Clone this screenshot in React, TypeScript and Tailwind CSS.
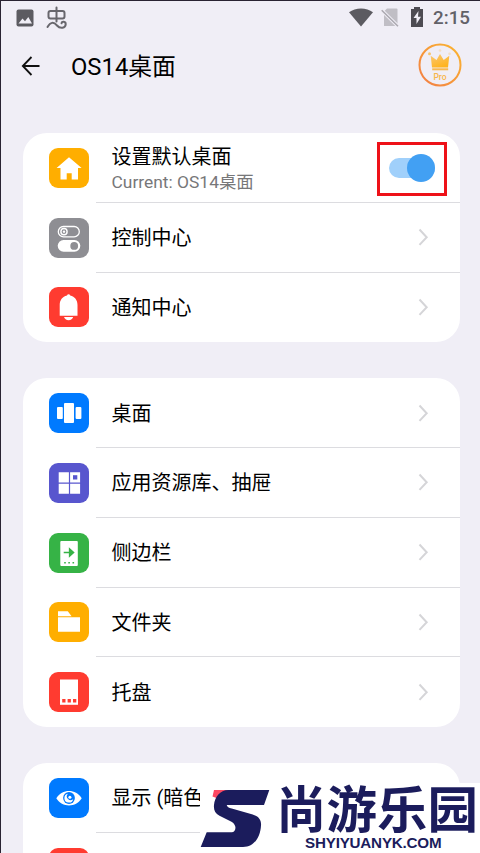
import type { ReactNode } from 'react';

const Tile = ({ color, children }: { color: string; children: ReactNode }) => (
  <svg className={`ml-[26px] h-10 w-10 shrink-0 rounded-[9px] ${color}`} viewBox="0 0 40 40" fill="#fff">
    {children}
  </svg>
);

const HomeIcon = () => (
  <Tile color="bg-[#ffae00]">
    <path d="M20 9.2 32.6 20H29v11.4h-6.300v-6.200h-5v6.200h-6.200V20H7.600Z" />
  </Tile>
);

const ControlIcon = () => (
  <Tile color="bg-[#8e8e93]">
    <rect x="9.300" y="8.500" width="21" height="10.300" rx="5.150" fill="none" stroke="#fff" strokeWidth="1.300" />
    <circle cx="15" cy="13.650" r="3.100" fill="none" stroke="#fff" strokeWidth="1.400" />
    <circle cx="15" cy="13.650" r="1.200" />
    <rect x="8.700" y="22" width="22.600" height="11.700" rx="5.850" />
    <circle cx="25.200" cy="27.900" r="3.900" fill="#8e8e93" />
  </Tile>
);

const BellIcon = () => (
  <Tile color="bg-[#ff3b30]">
    <path d="M18 8.500a1.700 1.700 0 0 1 3.200 0c4.600 1.100 7.300 4.600 7.300 9.500v10.700H10.700V18c0-4.900 2.700-8.400 7.300-9.500ZM15 30h9.200c-.7 2-2.200 3.200-4.600 3.200S15.700 32 15 30Z" />
  </Tile>
);

const DesktopIcon = () => (
  <Tile color="bg-[#007aff]">
    <rect x="8" y="14" width="5.800" height="12" rx="1" />
    <rect x="15" y="10" width="10" height="20" rx="1" />
    <rect x="26.600" y="14" width="5.800" height="12" rx="1" />
  </Tile>
);

const LibraryIcon = () => (
  <Tile color="bg-[#5856ce]">
    <path d="M9.700 9.300h10.200v10.200H9.700ZM21.100 9.300h10v10.200h-10ZM9.700 20.700h10.200v10H9.700ZM21.100 20.700h10v10h-10Z" />
    <rect x="24" y="12.200" width="4.300" height="4.300" fill="#5856ce" />
  </Tile>
);

const SidebarIcon = () => (
  <Tile color="bg-[#36b346]">
    <rect x="11.300" y="8" width="17.500" height="25" rx="1" />
    <path d="M14.700 19.500h8M20.500 15.700l4.200 3.800-4.200 3.800Z" fill="#36b346" stroke="#36b346" strokeWidth="1.300" />
    <path d="M15.200 29h1.600v1.600h-1.600ZM19.300 29h1.600v1.600h-1.600ZM23.500 29h1.600v1.600h-1.600Z" fill="#36b346" />
  </Tile>
);

const FolderIcon = () => (
  <Tile color="bg-[#ffae00]">
    <path d="M9 9.200h9.800l3.800 5H9ZM9 15.200h22v14.500H9Z" />
  </Tile>
);

const TrayIcon = () => (
  <Tile color="bg-[#ff3b30]">
    <rect x="11" y="7.500" width="18" height="25.300" />
    <path d="M13.200 26.900h3.300v3.600h-3.300ZM18.600 26.900h3.300v3.600h-3.300ZM24 26.900h3.300v3.600H24Z" fill="#ff3b30" />
  </Tile>
);

const EyeIcon = () => (
  <Tile color="bg-[#007aff]">
    <path d="M7.300 20.200C10.500 15.500 15 13 20 13s9.500 2.500 12.700 7.200C29.500 25 25 27.400 20 27.400S10.500 25 7.300 20.200Z" />
    <circle cx="20" cy="20" r="5.900" fill="#007aff" />
    <path d="M19 15.700a4.500 4.500 0 1 0 5.300 5.300 3.600 3.600 0 1 1-5.300-5.300Z" />
    <circle cx="20.900" cy="19.200" r="1.500" />
  </Tile>
);

const Chevron = () => (
  <svg className="mr-[30px] h-5 w-[14px] shrink-0" viewBox="0 0 14 20" fill="none" stroke="#d5d5d8" strokeWidth="2">
    <path d="m3.500 2.500 7.200 7.700-7.200 7.700" />
  </svg>
);

const Toggle = () => (
  <div className="mr-[13px] mt-[3px] flex h-[54px] w-[70px] shrink-0 items-center border-3 border-[#ee1118] pl-[9px] pb-[2px]">
    <div className="flex h-5 w-[46px] items-center justify-end rounded-full bg-[#a0d0fb]">
      <div className="h-7 w-7 shrink-0 rounded-full bg-[#42a0f3]" />
    </div>
  </div>
);

const Row = ({ icon, title, sub, last, end }: { icon: ReactNode; title: string; sub?: string; last?: boolean; end?: ReactNode }) => (
  <div className="flex h-[69.750px] items-center">
    {icon}
    <div className={`ml-[7px] flex h-full min-w-0 flex-1 items-center border-b pl-4 ${last ? 'border-transparent' : 'border-[#dcdce0]'}`}>
      <div className={`min-w-0 flex-1 whitespace-nowrap ${sub ? 'pt-1' : 'pt-[2px]'}`}>
        <div className="text-[20px] leading-[26px] text-black">{title}</div>
        {sub && <div className="text-[17.400px] leading-[25px] text-[#777779]">{sub}</div>}
      </div>
      {end ?? <Chevron />}
    </div>
  </div>
);

const Card = ({ children }: { children: ReactNode }) => (
  <section className="mx-auto w-[437px] shrink-0 overflow-hidden rounded-[24px] bg-white">{children}</section>
);

const StatusBar = () => (
  <div className="flex h-[34px] items-center pl-[15px] pr-[10px]">
    <svg className="h-[18px] w-[18px]" viewBox="0 0 18 18">
      <rect x=".5" y=".5" width="17" height="17" rx="2" fill="#5c5b61" />
      <path d="m2.500 14.500 4-5 2.500 2.800L12.300 8l3.700 6.500Z" fill="#f0eef6" />
    </svg>
    <svg className="ml-3 h-6 w-[22px]" viewBox="0 0 22 24" fill="none" stroke="#68676d" strokeWidth="2" strokeLinecap="round">
      <rect x="2.500" y="5" width="16" height="7.500" rx="2" />
      <path d="M10.500 1.500v14M1.500 21c3-5 6-5.500 9.500-1.500 3.300 3.800 8.500 2.500 8.700-1.300.1-3-3.800-3.200-4.200-1" />
    </svg>
    <svg className="ml-auto h-5 w-6" viewBox="0 0 24 20" fill="#5c5b61">
      <path d="M0 4.200C6.500-.9 17.500-.9 24 4.200L12 18.500Z" />
    </svg>
    <svg className="ml-2 h-5 w-[19px]" viewBox="0 0 19 20">
      <path d="M6 .5h9.500q1 0 1 1V18H3V3.500Z" fill="#c0bec5" />
      <path d="m.7 2.300 16.300 16" stroke="#f0eef6" strokeWidth="3.500" />
      <path d="m.7 2.300 16.300 16" stroke="#aaa8af" strokeWidth="1.500" />
    </svg>
    <svg className="mb-[2px] ml-[10px] h-5 w-[14px]" viewBox="0 0 14 20">
      <path d="M4 0h6v2h3v18H1V2h3Z" fill="#4d4b52" />
      <path d="M8.500 4 3.500 11h3v6l4.500-7.200H8Z" fill="#f0eef6" />
    </svg>
    <span className="ml-[9px] text-[18.800px] font-medium text-[#626168]">2:15</span>
  </div>
);

const ProBadge = () => (
  <svg className="h-11 w-11" viewBox="0 0 44 44">
    <defs>
      <linearGradient id="ring" x1="0" y1="1" x2="1" y2="0">
        <stop stopColor="#f27d45" />
        <stop offset="1" stopColor="#fbb62f" />
      </linearGradient>
      <linearGradient id="crown" x1="0" y1="0" x2=".5" y2="1">
        <stop stopColor="#f9c979" />
        <stop offset="1" stopColor="#ffb41f" />
      </linearGradient>
    </defs>
    <circle cx="22" cy="22" r="20.500" fill="none" stroke="url(#ring)" strokeWidth="2" />
    <path d="m12.700 12.800 5.800 4.200 3.500-6 3.700 6 5.600-4.200-1.300 11.700H14Z" fill="url(#crown)" />
    <g fill="#f9c36b">
      <circle cx="11.500" cy="10.700" r="1.500" />
      <circle cx="22" cy="7.500" r="1.300" opacity=".35" />
      <circle cx="31.500" cy="10.700" r="1.300" opacity=".35" />
    </g>
    <path d="M14.200 26.300h16" stroke="#f8b84f" strokeWidth="2" />
    <text x="22" y="36.800" textAnchor="middle" fontSize="8.500" fontWeight="500" fill="#f7b64b">Pro</text>
  </svg>
);

const Watermark = () => (
  <div className="absolute bottom-0 right-0 flex h-[70px] w-[280px] bg-white text-[#1b1c5c]">
    <svg className="-mt-px h-[71px] w-[72px] shrink-0" viewBox="0 0 72 71">
      <path d="M14 8h16L19 17l-6.500-2.500Z" fill="#fb4862" />
      <path d="M28.300 8h41L64 23H26.700c.5 2 2 2.700 5 3.500l21 6C59 34.500 61.500 38 61 43.500 60.500 54 55 65 43 65H.7l6-14.700h25c4 0 6-7-.2-10.600l-12-6C15 31.500 13.500 28 14 23c.8-8 6-15 14.300-15Z" fill="currentColor" />
    </svg>
    <div className="flex w-[208px] flex-col whitespace-nowrap pl-[4px] pt-[4px]">
      <div className="h-[48px] text-[50.500px] font-bold leading-[48px]">尚游乐园</div>
      <div className="ml-[29px] font-['Liberation_Sans'] text-[15.200px] font-bold leading-[16px] tracking-[-0.200px]">SHYIYUANYK.COM</div>
    </div>
  </div>
);

export default function App() {
  return (
    <main className="relative h-[853px] w-[480px] overflow-hidden border-l border-t border-[#292332] bg-[#f0eef6] font-[Roboto,'Noto_Sans_CJK_SC',sans-serif]">
      <StatusBar />
      <header className="flex h-[60px] items-center pl-5 pr-[18px]">
        <svg className="mt-[2px] h-5 w-5" viewBox="0 0 20 20" fill="none" stroke="#111" strokeWidth="1.800">
          <path d="M18.500 10H2M10.500 1 1.800 10l8.700 9" />
        </svg>
        <h1 className="ml-[30px] mt-[3px] flex-1 text-[23.800px] leading-[32px] text-black">OS14桌面</h1>
        <ProBadge />
      </header>
      <div className="mt-[38px] flex flex-col gap-[36px] pl-px">
        <Card>
          <Row icon={<HomeIcon />} title="设置默认桌面" sub="Current: OS14桌面" end={<Toggle />} />
          <Row icon={<ControlIcon />} title="控制中心" />
          <Row icon={<BellIcon />} title="通知中心" last />
        </Card>
        <Card>
          <Row icon={<DesktopIcon />} title="桌面" />
          <Row icon={<LibraryIcon />} title="应用资源库、抽屉" />
          <Row icon={<SidebarIcon />} title="侧边栏" />
          <Row icon={<FolderIcon />} title="文件夹" />
          <Row icon={<TrayIcon />} title="托盘" last />
        </Card>
        <Card>
          <Row icon={<EyeIcon />} title="显示 (暗色" />
          <Row icon={<Tile color="bg-[#ff3b30]">{null}</Tile>} title="" />
        </Card>
      </div>
      <Watermark />
    </main>
  );
}
